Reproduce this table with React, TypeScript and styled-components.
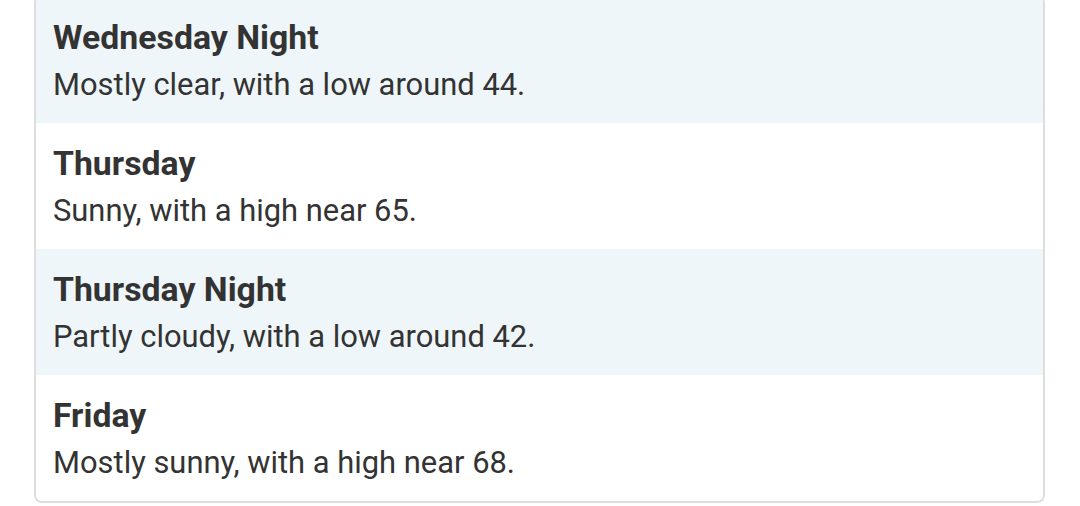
import React from "react";
import styled, { createGlobalStyle } from "styled-components";

const Global = createGlobalStyle`
  html, body { margin: 0; padding: 0; background: #ffffff; }
  body { font-family: Roboto, "Noto Sans", sans-serif; overflow: hidden; }
`;

const Page = styled.div`
  width: 1080px;
  height: 506px;
  padding: 0 35px 0 34px;
  box-sizing: border-box;
  overflow: hidden;
`;

const Card = styled.div`
  margin-top: -5px;
  border: 2px solid #dddddd;
  border-radius: 8px;
  overflow: hidden;
  display: flex;
  flex-direction: column;
`;

const Row = styled.div<{ $shaded: boolean }>`
  height: 126px;
  box-sizing: border-box;
  padding: 18px 17px 0;
  background: ${(p) => (p.$shaded ? "#eff6fa" : "#ffffff")};
  color: #333333;
`;

const Title = styled.div`
  font-size: 33.8px;
  font-weight: 700;
  line-height: 46px;
`;

const Detail = styled.div`
  font-size: 30.9px;
  font-weight: 400;
  line-height: 48px;
`;

const periods = [
  { name: "Wednesday Night", text: "Mostly clear, with a low around 44." },
  { name: "Thursday", text: "Sunny, with a high near 65." },
  { name: "Thursday Night", text: "Partly cloudy, with a low around 42." },
  { name: "Friday", text: "Mostly sunny, with a high near 68." },
];

export default function App() {
  return (
    <Page>
      <Global />
      <Card>
        {periods.map((p, i) => (
          <Row key={p.name} $shaded={i % 2 === 0}>
            <Title>{p.name}</Title>
            <Detail>{p.text}</Detail>
          </Row>
        ))}
      </Card>
    </Page>
  );
}
